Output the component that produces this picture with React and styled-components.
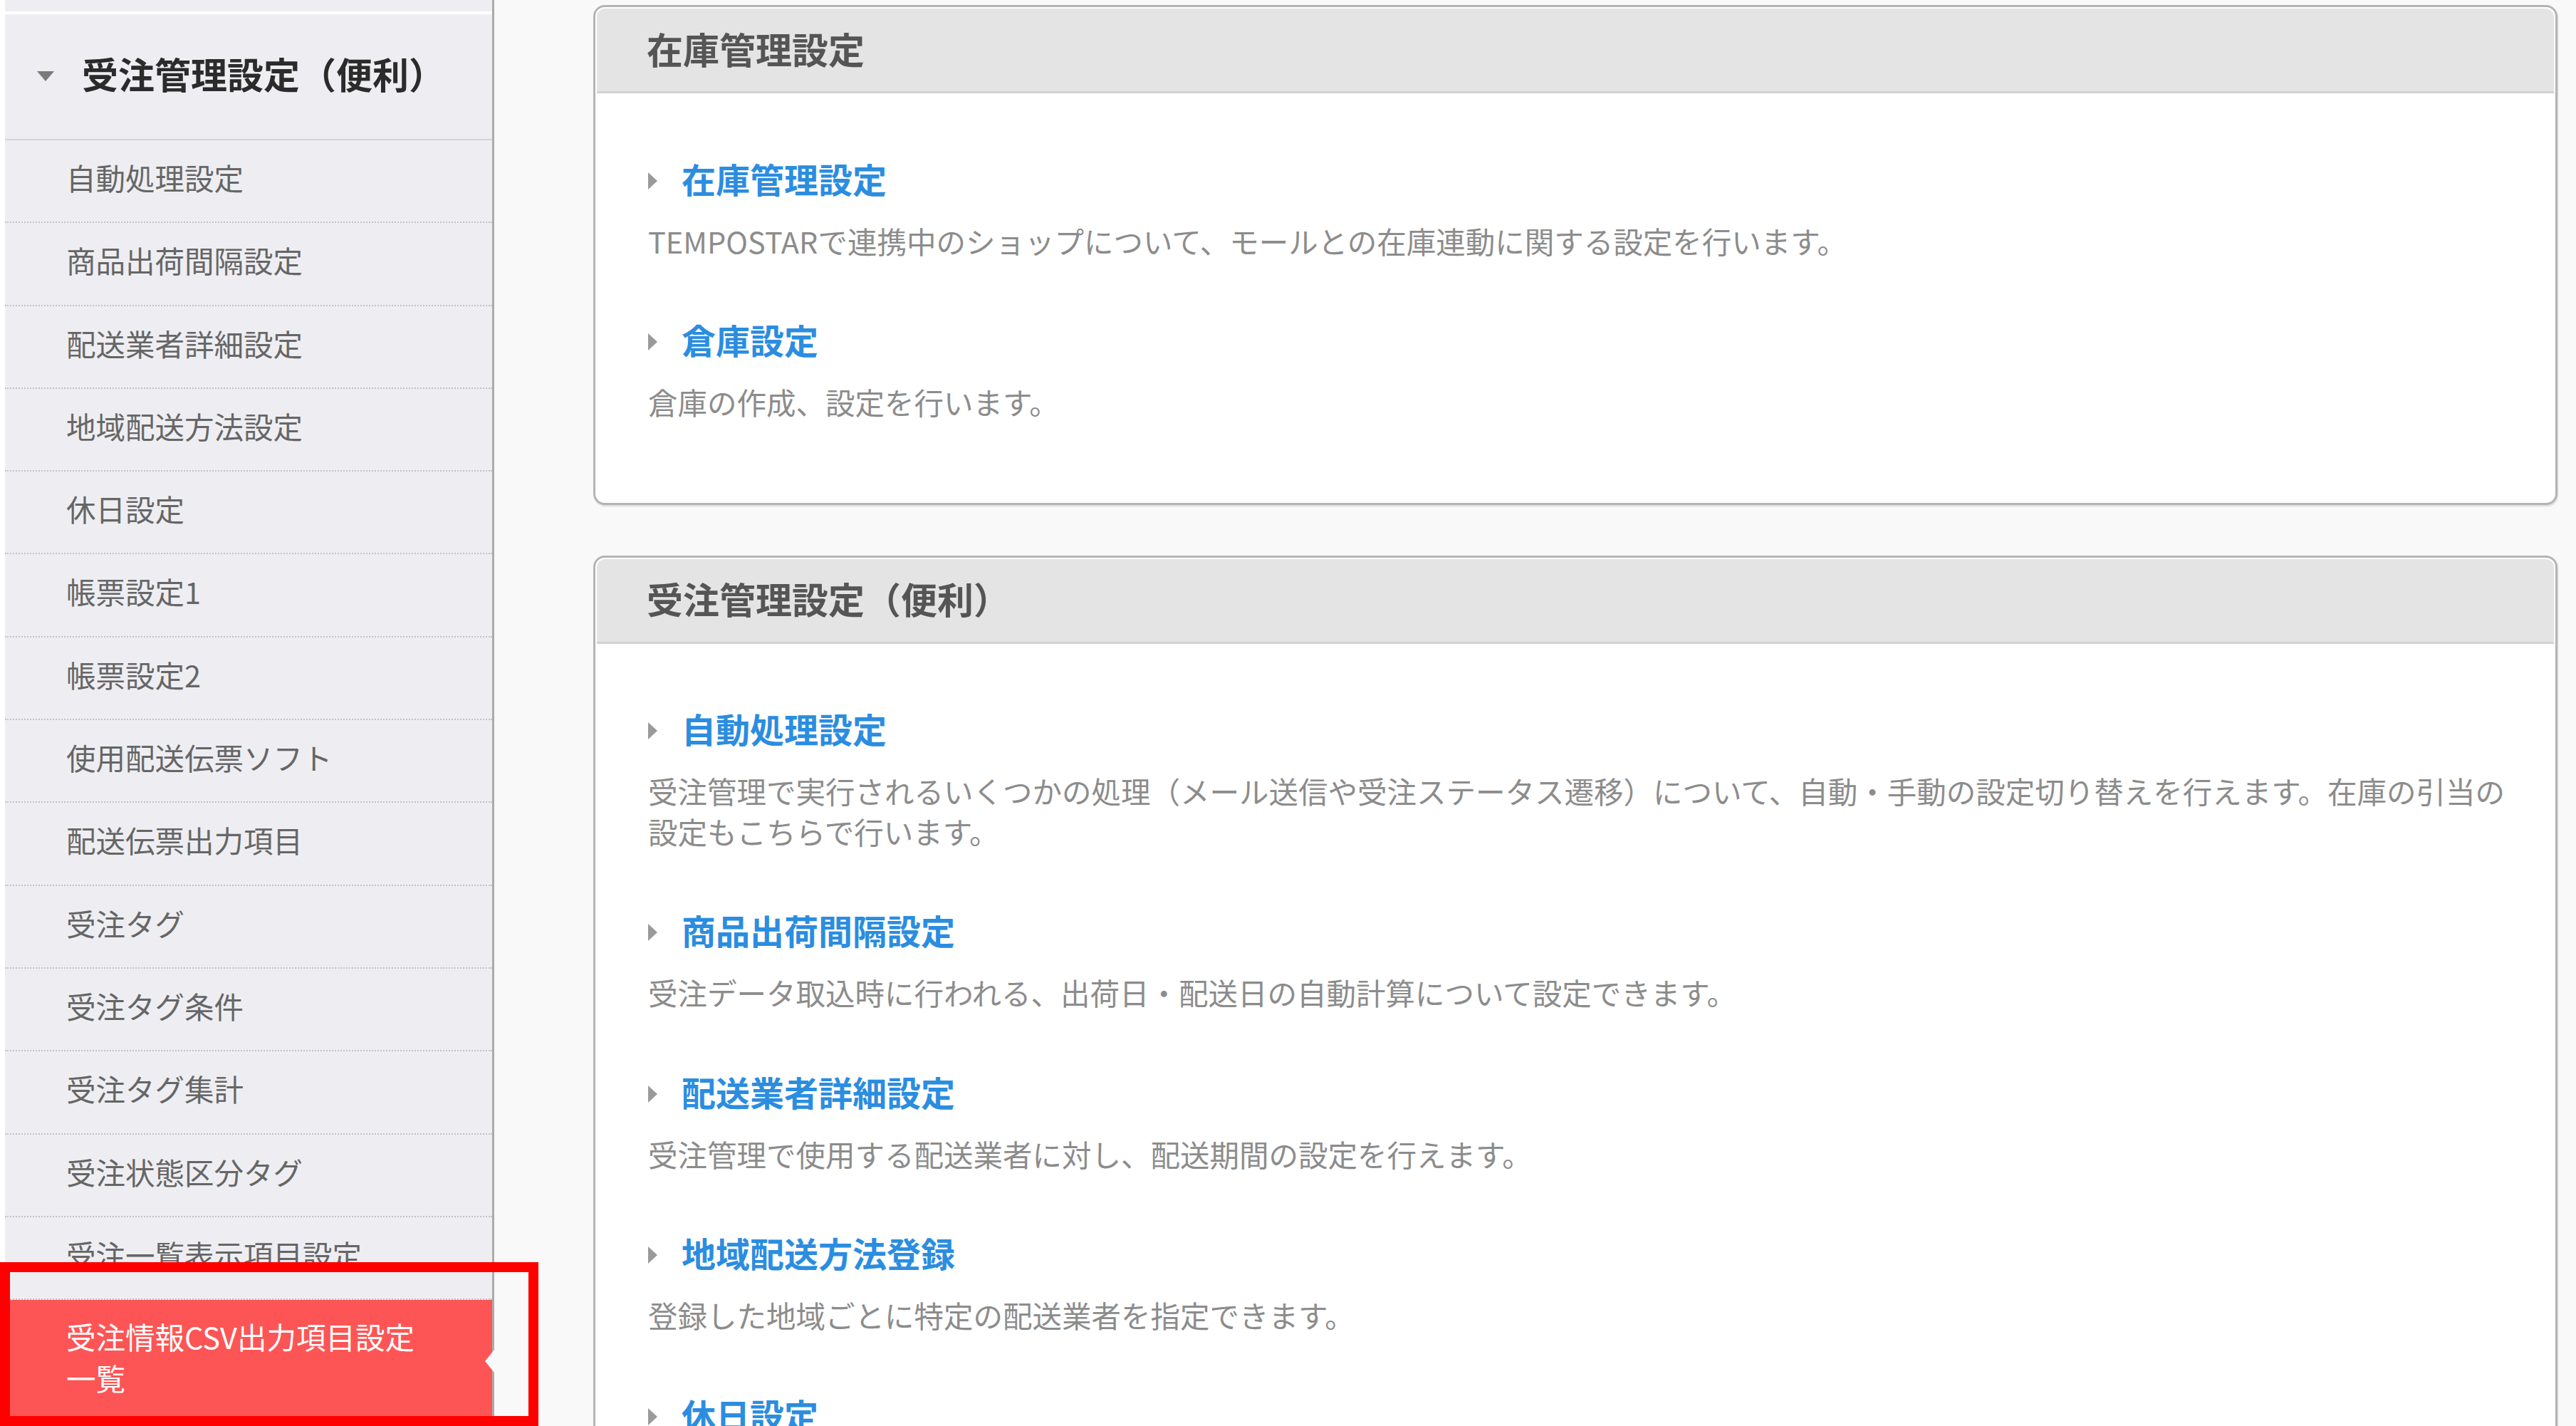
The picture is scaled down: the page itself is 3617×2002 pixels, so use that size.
import React from "react";
import styled, { createGlobalStyle } from "styled-components";

const GlobalStyle = createGlobalStyle`
  html, body {
    margin: 0;
    padding: 0;
    background: #f9f9f9;
  }
  body {
    font-family: "Noto Sans CJK JP", "Noto Sans", sans-serif;
    overflow: hidden;
  }
  * { box-sizing: border-box; }
`;

const Page = styled.div`
  position: relative;
  display: flex;
  height: 2002px;
  overflow: hidden;
  background: #f9f9f9;
`;

const Sidebar = styled.nav`
  flex: none;
  width: 694px;
  display: flex;
  flex-direction: column;
  border-left: 7px solid #ffffff;
  border-right: 3px solid #ababab;
  background: #eeeef2;
`;

const TopStub = styled.div`
  height: 20px;
  border-bottom: 4px solid #ffffff;
`;

const SideHeader = styled.div`
  height: 177px;
  display: flex;
  align-items: center;
  gap: 39px;
  padding-left: 45px;
  padding-bottom: 8px;
  border-bottom: 2px solid #d3d3d7;
  font-size: 51px;
  font-weight: 700;
  color: #2b2b2b;
  line-height: 1;
`;

const DownCaret = styled.span`
  width: 0;
  height: 0;
  margin-top: 6px;
  border-left: 12px solid transparent;
  border-right: 12px solid transparent;
  border-top: 14px solid #7a7a7a;
`;

const SideItem = styled.a`
  position: relative;
  display: block;
  flex: none;
  text-decoration: none;
  font-size: 41.5px;
  padding-left: 86px;
  ${({ $active }) =>
    $active
      ? `
    background: #fd5555;
    color: #ffffff;
    padding-top: 22px;
    padding-right: 90px;
    padding-bottom: 34px;
    line-height: 58px;
    &::after {
      content: "";
      position: absolute;
      right: -3px;
      top: 50%;
      transform: translateY(-50%);
      border-top: 16px solid transparent;
      border-bottom: 16px solid transparent;
      border-right: 13px solid #f9f9f9;
    }
  `
      : `
    height: 116.3px;
    line-height: 104px;
    padding-bottom: 10px;
    color: #666666;
    border-bottom: 2px dotted #c2c2c6;
  `}
`;

const Main = styled.main`
  flex: 1;
  min-width: 0;
  display: flex;
  flex-direction: column;
  gap: 71px;
  padding: 7px 26px 0 139px;
`;

const Panel = styled.section`
  flex: none;
  border: 3px solid #b4b4b4;
  border-radius: 16px;
  padding: 2px;
  background: #ffffff;
  box-shadow: 1px 2px 2px rgba(0, 0, 0, 0.12);
`;

const PanelHeader = styled.h2`
  margin: 0;
  height: 119px;
  display: flex;
  align-items: center;
  padding-left: 70px;
  padding-bottom: 4px;
  background: #e4e4e4;
  border-radius: 12px 12px 0 0;
  border-bottom: 3px solid #d2d2d2;
  font-size: 51px;
  font-weight: 700;
  color: #555555;
  line-height: 1;
`;

const PanelBody = styled.div`
  display: flex;
  flex-direction: column;
  gap: 80px;
  padding: 88.5px 46px 111px 72px;
`;

const Entry = styled.div`
  display: flex;
  flex-direction: column;
  gap: 30px;
`;

const EntryLink = styled.a`
  display: flex;
  align-items: center;
  gap: 34px;
  height: 60px;
  font-size: 48px;
  font-weight: 700;
  color: #2b8de0;
  text-decoration: none;
  line-height: 60px;
`;

const RightCaret = styled.span`
  flex: none;
  width: 0;
  height: 0;
  border-top: 12px solid transparent;
  border-bottom: 12px solid transparent;
  border-left: 13px solid #9a9a9a;
  margin-top: 8px;
`;

const EntryDesc = styled.p`
  margin: 0;
  font-size: 41.5px;
  line-height: 56.5px;
  color: #8c8c8c;
`;

const Annotation = styled.div`
  position: absolute;
  left: 0;
  top: 1772px;
  width: 756px;
  height: 230px;
  border: 14px solid #ff0000;
  pointer-events: none;
`;

const sideItems = [
  "自動処理設定",
  "商品出荷間隔設定",
  "配送業者詳細設定",
  "地域配送方法設定",
  "休日設定",
  "帳票設定1",
  "帳票設定2",
  "使用配送伝票ソフト",
  "配送伝票出力項目",
  "受注タグ",
  "受注タグ条件",
  "受注タグ集計",
  "受注状態区分タグ",
  "受注一覧表示項目設定",
];

const panels = [
  {
    title: "在庫管理設定",
    entries: [
      {
        link: "在庫管理設定",
        desc: "TEMPOSTARで連携中のショップについて、モールとの在庫連動に関する設定を行います。",
      },
      { link: "倉庫設定", desc: "倉庫の作成、設定を行います。" },
    ],
  },
  {
    title: "受注管理設定（便利）",
    entries: [
      {
        link: "自動処理設定",
        desc: "受注管理で実行されるいくつかの処理（メール送信や受注ステータス遷移）について、自動・手動の設定切り替えを行えます。在庫の引当の設定もこちらで行います。",
      },
      {
        link: "商品出荷間隔設定",
        desc: "受注データ取込時に行われる、出荷日・配送日の自動計算について設定できます。",
      },
      {
        link: "配送業者詳細設定",
        desc: "受注管理で使用する配送業者に対し、配送期間の設定を行えます。",
      },
      {
        link: "地域配送方法登録",
        desc: "登録した地域ごとに特定の配送業者を指定できます。",
      },
      { link: "休日設定", desc: "休日の設定を行います。" },
    ],
  },
];

export default function App() {
  return (
    <>
      <GlobalStyle />
      <Page>
        <Sidebar>
          <TopStub />
          <SideHeader>
            <DownCaret />
            <span>受注管理設定（便利）</span>
          </SideHeader>
          {sideItems.map((label) => (
            <SideItem key={label} href="#">
              {label}
            </SideItem>
          ))}
          <SideItem $active href="#">
            受注情報CSV出力項目設定一覧
          </SideItem>
        </Sidebar>
        <Main>
          {panels.map((p) => (
            <Panel key={p.title}>
              <PanelHeader>{p.title}</PanelHeader>
              <PanelBody>
                {p.entries.map((e) => (
                  <Entry key={e.link}>
                    <EntryLink href="#">
                      <RightCaret />
                      <span>{e.link}</span>
                    </EntryLink>
                    <EntryDesc>{e.desc}</EntryDesc>
                  </Entry>
                ))}
              </PanelBody>
            </Panel>
          ))}
        </Main>
        <Annotation />
      </Page>
    </>
  );
}
